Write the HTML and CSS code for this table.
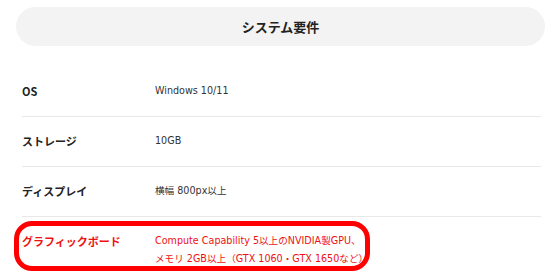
FILE: index.html
```html
<!DOCTYPE html>
<html lang="ja">
<head>
<meta charset="utf-8">
<title>システム要件</title>
<link rel="stylesheet" href="styles.css">
</head>
<body>
<section class="spec">
  <h2 class="spec-title">システム要件</h2>
  <dl class="spec-list">
    <div class="spec-row">
      <dt class="spec-label">OS</dt>
      <dd class="spec-value">Windows 10/11</dd>
    </div>
    <div class="spec-row">
      <dt class="spec-label">ストレージ</dt>
      <dd class="spec-value">10GB</dd>
    </div>
    <div class="spec-row">
      <dt class="spec-label">ディスプレイ</dt>
      <dd class="spec-value">横幅 800px以上</dd>
    </div>
    <div class="spec-row spec-row--marked">
      <dt class="spec-label">グラフィックボード</dt>
      <dd class="spec-value">Compute Capability 5以上のNVIDIA製GPU、<br>メモリ 2GB以上（GTX 1060・GTX 1650など）</dd>
      <span class="mark-ring" aria-hidden="true"></span>
    </div>
  </dl>
</section>
</body>
</html>
```

FILE: styles.css
```css
html, body {
  margin: 0;
  padding: 0;
  background: #ffffff;
}

body {
  font-family: "DejaVu Sans", "Noto Sans CJK JP", sans-serif;
  color: #333333;
}

.spec {
  padding: 7px 15px 0 16px;
}

.spec-title {
  margin: 0;
  height: 39px;
  display: flex;
  align-items: center;
  justify-content: center;
  background: #f3f3f3;
  border-radius: 20px;
  font-family: "Noto Sans CJK JP", sans-serif;
  font-size: 13px;
  font-weight: 700;
  color: #222222;
}

.spec-list {
  margin: 21px 4px 0 6px;
  padding: 0;
}

.spec-row {
  position: relative;
  display: flex;
  padding: 15px 0 16px;
  line-height: 18px;
  border-bottom: 1px solid #e8e8e8;
}

.spec-row--marked {
  border-bottom: none;
}

.spec-label {
  flex: 0 0 133px;
  margin: 0;
  font-family: "Noto Sans CJK JP", sans-serif;
  font-size: 11px;
  font-weight: 700;
  color: #222222;
}

.spec-value {
  margin: 0;
  font-size: 9.6px;
  color: #333333;
}

.spec-row--marked .spec-label,
.spec-row--marked .spec-value {
  color: #ee1111;
}

/* hand-drawn style highlight ring around the graphics card row */
.mark-ring {
  position: absolute;
  left: -8px;
  top: 4px;
  width: 356px;
  height: 50px;
  box-sizing: border-box;
  border: 5px solid #ff0000;
  border-radius: 18px;
  pointer-events: none;
}
```
